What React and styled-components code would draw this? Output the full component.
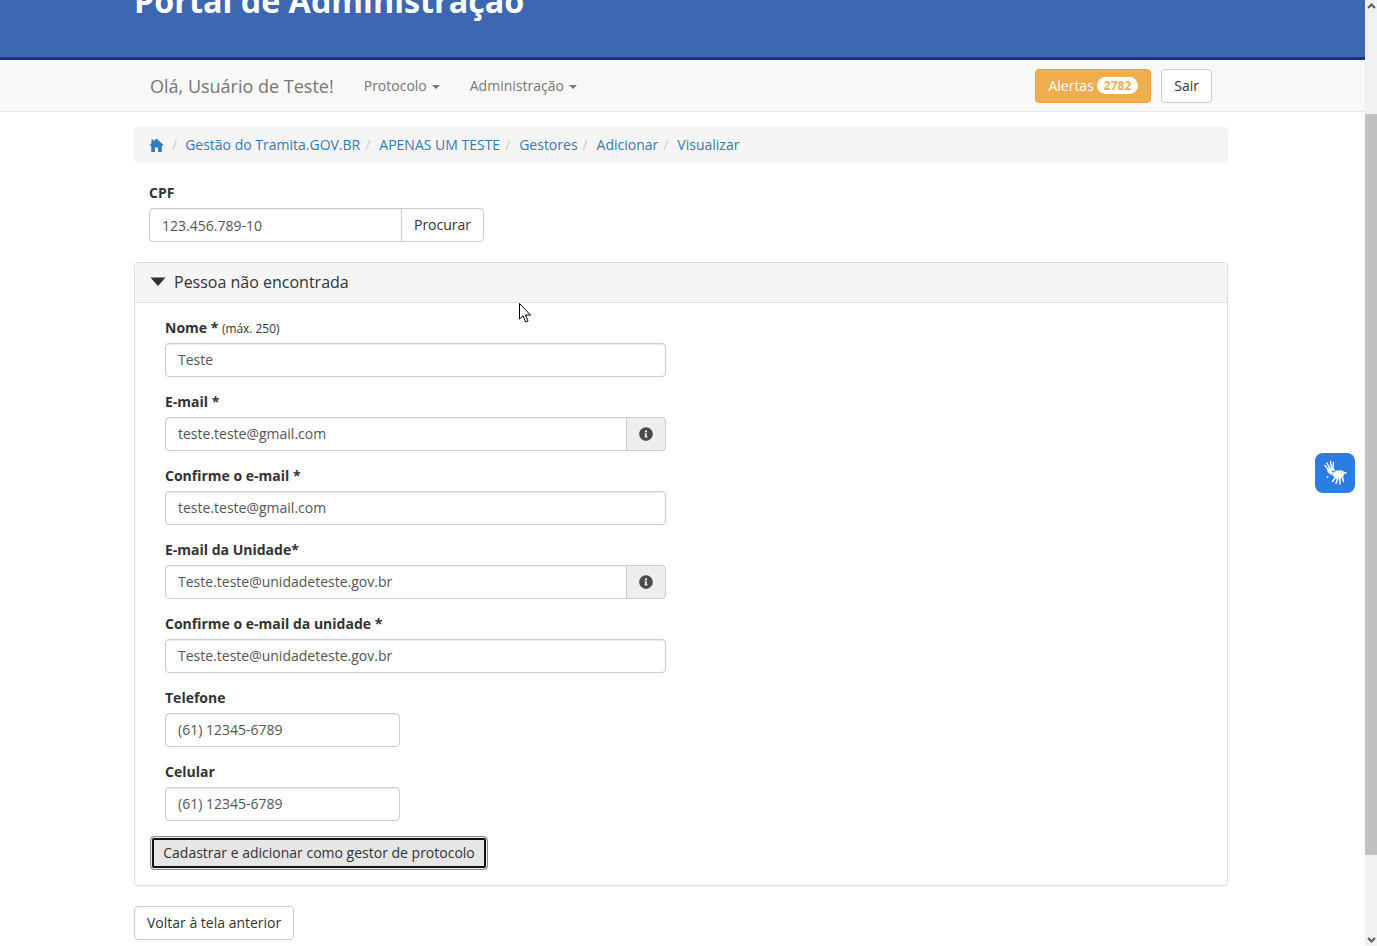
import React from "react";
import styled, { createGlobalStyle } from "styled-components";
import { FaInfoCircle } from "react-icons/fa";

const Global = createGlobalStyle`
  html, body { margin: 0; height: 100%; overflow: hidden; background: #fff; }
  body { font-family: "Open Sans", sans-serif; font-size: 14px; line-height: 20px; color: #333; }
  * { box-sizing: border-box; }
`;
const Viewport = styled.div`position: relative; display: flex; width: 1377px; height: 946px; overflow: hidden;`;
const Page = styled.div`flex: 0 0 1365px; width: 1365px; height: 946px; overflow: hidden;`;
const Scrollbar = styled.div`flex: 0 0 12px; display: flex; flex-direction: column; background: #f1f1f1;`;
const ScrollArrow = styled.div`flex: 0 0 ${p => p.$h}px; display: flex; align-items: ${p => p.$end ? "flex-end" : "flex-start"}; justify-content: center; padding: 3px 0;`;
const ScrollThumb = styled.div`flex: 0 0 741px; background: #c1c1c1;`;
const ScrollTrack = styled.div`flex: 1;`;

const Banner = styled.header`height: 60px; background: #3d67b1; border-bottom: 3px solid #1f3572; overflow: hidden; padding-left: 134px; display: flex; align-items: flex-end;`;
const Title = styled.h1`margin: 0 0 42px; font-size: 32.3px; line-height: 30px; font-weight: 700; color: #fff; white-space: nowrap;`;

const Nav = styled.nav`height: 52px; background: #f8f8f6; border-bottom: 1px solid #e7e7e7; display: flex; align-items: center; padding: 0 153px 0 150px;`;
const Brand = styled.span`font-size: 18px; color: #777; margin-right: 30px;`;
const NavItem = styled.span`display: inline-flex; align-items: center; color: #777; margin-right: 30px;`;
const Caret = styled.span`display: inline-block; margin-left: 5px; margin-top: 2px; border-top: 4px solid #777; border-left: 4px solid transparent; border-right: 4px solid transparent;`;
const NavRight = styled.div`margin-left: auto; display: flex; gap: 10px; align-items: center;`;
const Btn = styled.button`
  font: inherit; height: 34px; padding: 0 12px; border: 1px solid #ccc; border-radius: 4px; background: #fff; color: #333; white-space: nowrap;
`;
const AlertBtn = styled(Btn)`display: inline-flex; align-items: center; gap: 3px; background: #f0ad4e; border-color: #eea236; color: #fff;`;
const Badge = styled.span`display: inline-block; min-width: 41px; height: 17px; padding: 0 7px; border-radius: 10px; background: #fff; color: #f0ad4e; font-size: 12px; font-weight: 700; line-height: 17px; text-align: center;`;

const Container = styled.main`width: 1094px; margin-left: 134px; padding-top: 15px;`;
const Crumbs = styled.ol`list-style: none; margin: 0 0 20px; height: 36px; padding: 0 15px; background: #f5f5f5; border-radius: 4px; display: flex; align-items: center;`;
const Crumb = styled.li`
  display: flex; align-items: center; color: #337ab7;
  &:not(:first-child)::before { content: "/"; color: #ccc; padding: 0 ${p => p.$wide ? "8px 0 8px" : "8.9px 0 5px"}; }
`;
const CpfBlock = styled.div`padding-left: 15px; margin-bottom: 20px;`;
const Label = styled.label`display: block; font-weight: 700; margin-bottom: 5px; line-height: 20px; white-space: nowrap;`;
const Small = styled.small`font-size: 11.9px; font-weight: 400;`;
const InputGroup = styled.div`display: flex; width: ${p => p.$w}px; height: 34px;`;
const Input = styled.input`
  flex: 1; min-width: 0; width: 100%; height: 34px; padding: ${p => p.$lift ? "5px 12px 7px" : "6px 12px"}; border: 1px solid #ccc; color: #555; background: #fff;
  font: inherit; border-radius: ${p => p.$joined ? "4px 0 0 4px" : "4px"}; outline: none;
  box-shadow: inset 0 1px 1px rgba(0,0,0,.075);
`;
const SearchBtn = styled(Btn)`flex: 0 0 83px; padding: 0; margin-left: -1px; border-radius: 0 4px 4px 0;`;
const Addon = styled.span`flex: 0 0 40px; margin-left: -1px; border: 1px solid #ccc; border-radius: 0 4px 4px 0; background: #eee; color: #4a4a4a; display: flex; align-items: center; justify-content: center; font-size: 14px;`;

const Panel = styled.section`border: 1px solid #ddd; border-radius: 4px; height: 624px; margin-bottom: 20px; box-shadow: 0 1px 1px rgba(0,0,0,.05);`;
const PanelHead = styled.div`height: 40px; padding: 0 15px 2px; display: flex; align-items: center; gap: 8px; background: #f5f5f5; border-bottom: 1px solid #ddd; font-size: 16px; border-radius: 3px 3px 0 0;`;
const PanelBody = styled.div`padding: 15px 15px 0;`;
const Group = styled.div`padding-left: 15px; margin-bottom: 15px;`;
const SubmitBtn = styled(Btn)`
  display: block; background: #e6e6e6; border: 1px solid #8c8c8c; padding: 0 12px; width: 338px; outline: none;
  box-shadow: inset 0 0 0 1px #eee, inset 0 0 0 3px #111;
`;

const Access = styled.div`position: absolute; left: 1315px; top: 453px; width: 40px; height: 40px; border-radius: 8px; background: #2b7de3; display: flex; align-items: center; justify-content: center;`;
const Cursor = styled.svg`position: absolute; left: 519px; top: 303px;`;

const Chevron = ({ up }) => (
  <svg width="9" height="6" viewBox="0 0 9 6"><path d={up ? "M1 5 L4.5 1.5 L8 5" : "M1 1 L4.5 4.5 L8 1"} fill="none" stroke="#5c5c6b" strokeWidth="2" /></svg>
);
const Home = () => (
  <svg width="15" height="14" viewBox="0 0 15 14"><path fill="#337ab7" d="M7.5 0.5 L15 7.5 H12.8 V14 H9 V9.5 H6 V14 H2.2 V7.5 H0 L2.5 5.2 V1.5 H4.6 V3.2 Z" /></svg>
);
const Triangle = () => (
  <svg width="16" height="9" viewBox="0 0 16 9" style={{ marginTop: -1 }}><path fill="#333" d="M0.5 0.5 H15.5 L8.6 8.4 H7.4 Z" /></svg>
);
const Hands = () => (
  <svg width="40" height="40" viewBox="0 0 40 40" fill="none" stroke="#fff" strokeLinecap="round">
    <path strokeWidth="1.5" d="M10 12.5 L13.5 17 M12 10 L15 16 M15.5 8.5 L16.5 15 M18.5 9.5 L18 15" />
    <path fill="#fff" strokeWidth="0.6" d="M13 16 L18 15 L20 17 L15.5 18.5 L18 19.5 L16 21.5 L13 19 Z" />
    <path fill="#fff" strokeWidth="0.6" d="M17 21 L21 18 L26 17.5 L29 19 L28.5 23 L25 26 L21 25.5 Z" />
    <path strokeWidth="1.5" d="M20 25 L17.5 28.5 M22.5 26 L21 30.5 M25 26 L25 31 M27.5 24.5 L28.5 28.5 M28.5 19.5 L31 20" />
    <circle cx="12.5" cy="24" r="0.9" fill="#fff" stroke="none" />
  </svg>
);

const fields = [
  { label: <>Nome * <Small>(máx. 250)</Small></>, value: "Teste", w: 501 },
  { label: "E-mail *", value: "teste.teste@gmail.com", w: 501, info: true },
  { label: "Confirme o e-mail *", value: "teste.teste@gmail.com", w: 501 },
  { label: "E-mail da Unidade*", value: "Teste.teste@unidadeteste.gov.br", w: 501, info: true },
  { label: "Confirme o e-mail da unidade *", value: "Teste.teste@unidadeteste.gov.br", w: 501 },
  { label: "Telefone", value: "(61) 12345-6789", w: 235 },
  { label: "Celular", value: "(61) 12345-6789", w: 235 },
];
const crumbs = ["Gestão do Tramita.GOV.BR", "APENAS UM TESTE", "Gestores", "Adicionar", "Visualizar"];

export default function App() {
  return (
    <Viewport>
      <Global />
      <Page>
        <Banner><Title>Portal de Administração</Title></Banner>
        <Nav>
          <Brand>Olá, Usuário de Teste!</Brand>
          <NavItem>Protocolo<Caret /></NavItem>
          <NavItem>Administração<Caret /></NavItem>
          <NavRight>
            <AlertBtn>Alertas <Badge>2782</Badge></AlertBtn>
            <Btn>Sair</Btn>
          </NavRight>
        </Nav>
        <Container>
          <Crumbs>
            <Crumb><Home /></Crumb>
            {crumbs.map((c, i) => <Crumb key={c} $wide={i === 0}>{c}</Crumb>)}
          </Crumbs>
          <CpfBlock>
            <Label>CPF</Label>
            <InputGroup $w={335}>
              <Input $joined defaultValue="123.456.789-10" />
              <SearchBtn>Procurar</SearchBtn>
            </InputGroup>
          </CpfBlock>
          <Panel>
            <PanelHead><Triangle />Pessoa não encontrada</PanelHead>
            <PanelBody>
              {fields.map(f => (
                <Group key={f.value + f.w + String(f.label)}>
                  <Label>{f.label}</Label>
                  <InputGroup $w={f.w}>
                    <Input $lift $joined={f.info} defaultValue={f.value} />
                    {f.info && <Addon><FaInfoCircle /></Addon>}
                  </InputGroup>
                </Group>
              ))}
              <SubmitBtn>Cadastrar e adicionar como gestor de protocolo</SubmitBtn>
            </PanelBody>
          </Panel>
          <Btn>Voltar à tela anterior</Btn>
        </Container>
      </Page>
      <Scrollbar>
        <ScrollArrow $h={114}><Chevron up /></ScrollArrow>
        <ScrollThumb />
        <ScrollTrack />
        <ScrollArrow $h={20} $end><Chevron /></ScrollArrow>
      </Scrollbar>
      <Access><Hands /></Access>
      <Cursor width="13" height="20" viewBox="0 0 13 20">
        <path d="M0.5 0.5 V16 L4 12.8 L6.6 19 L9 18 L6.5 12 H11.5 Z" fill="#fff" stroke="#000" strokeWidth="1" />
      </Cursor>
    </Viewport>
  );
}
